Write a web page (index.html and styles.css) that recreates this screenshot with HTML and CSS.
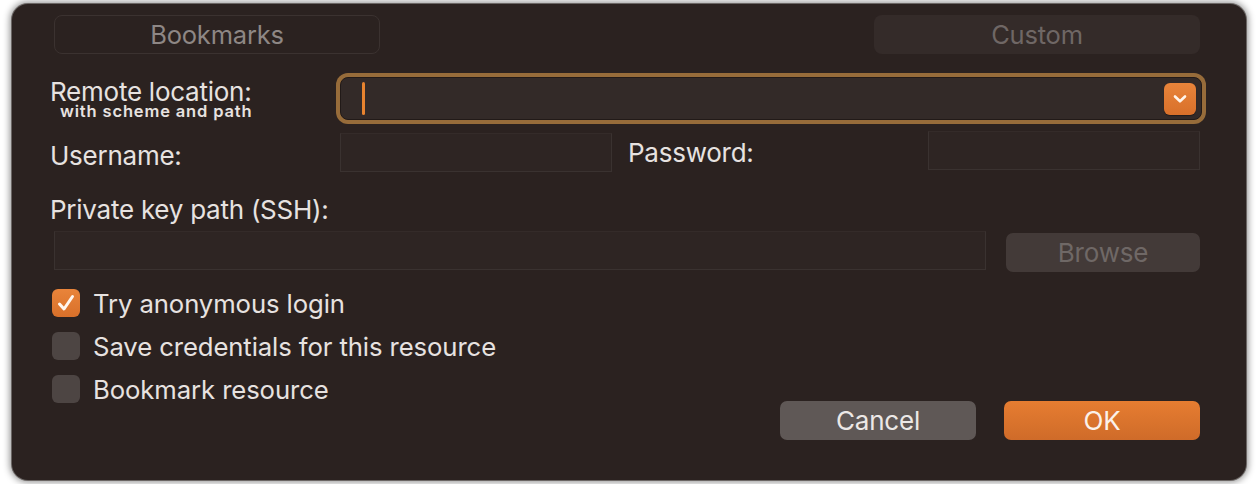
FILE: index.html
```html
<!DOCTYPE html>
<html>
<head>
<meta charset="utf-8">
<link rel="stylesheet" href="styles.css">
</head>
<body>
<div class="window">
  <div class="tabs">
    <div class="tab tab-bookmarks">Bookmarks</div>
    <div class="tab tab-custom">Custom</div>
  </div>

  <div class="row row-remote">
    <div class="label-block">
      <div class="label remote-label">Remote location:</div>
      <div class="sublabel">with scheme and path</div>
    </div>
    <div class="combo">
      <span class="caret"></span>
      <span class="combo-btn">
        <svg width="16" height="12" viewBox="0 0 16 12"><path d="M3 3.5 L8 8.3 L13 3.5" fill="none" stroke="#fff4ea" stroke-width="2.6" stroke-linecap="round" stroke-linejoin="round"/></svg>
      </span>
    </div>
  </div>

  <div class="row row-cred">
    <div class="label user-label">Username:</div>
    <div class="field user-field"></div>
    <div class="label pass-label">Password:</div>
    <div class="field pass-field"></div>
  </div>

  <div class="label key-label">Private key path (SSH):</div>
  <div class="row row-key">
    <div class="field key-field"></div>
    <div class="btn btn-browse">Browse</div>
  </div>

  <div class="bottom">
    <div class="checks">
      <div class="check">
        <span class="box box-on">
          <svg width="22" height="20" viewBox="0 0 22 20"><path d="M4.5 11 L9 16 L17.5 3.5" fill="none" stroke="#fff6ee" stroke-width="3" stroke-linecap="round" stroke-linejoin="round"/></svg>
        </span>
        <span class="check-text">Try anonymous login</span>
      </div>
      <div class="check">
        <span class="box"></span>
        <span class="check-text">Save credentials for this resource</span>
      </div>
      <div class="check">
        <span class="box"></span>
        <span class="check-text">Bookmark resource</span>
      </div>
    </div>
    <div class="actions">
      <div class="btn btn-cancel">Cancel</div>
      <div class="btn btn-ok">OK</div>
    </div>
  </div>
</div>
</body>
</html>
```

FILE: styles.css
```css
* { box-sizing: border-box; }
html, body { margin: 0; padding: 0; background: #ffffff; }
body {
  width: 1256px;
  height: 484px;
  padding: 4px 10px 0 12px;
  font-family: Inter, "Noto Sans", sans-serif;
  overflow: hidden;
}
.window {
  width: 1234px;
  height: 476px;
  background: #2b2220;
  border-radius: 16px;
  box-shadow: 0 0 0 1px #6b6664, 0 0 7px 2px rgba(0,0,0,0.45);
  padding: 11px 46px 0 38px;
  display: flex;
  flex-direction: column;
  color: #e7e2e0;
}
.tabs {
  display: flex;
  justify-content: space-between;
  padding-left: 4px;
  height: 39px;
}
.tab {
  width: 326px;
  height: 39px;
  border-radius: 8px;
  display: flex;
  align-items: center;
  justify-content: center;
  font-size: 25.5px;
  letter-spacing: -0.2px;
  line-height: 26px;
}
.tab-bookmarks {
  border: 1px solid #3b3230;
  color: #8e8785;
}
.tab-custom {
  background: #342b29;
  color: #6f6765;
}
.row { display: flex; align-items: flex-start; }
.label {
  font-size: 26px;
  line-height: 26px;
  letter-spacing: -0.25px;
  color: #e7e2e0;
}
.row-remote {
  margin-top: 23px;
  height: 43px;
}
.label-block { width: 290px; margin-top: 3.5px; }
.remote-label { line-height: 22px; }
.sublabel {
  font-size: 16.5px;
  font-weight: 600;
  letter-spacing: 0.85px;
  line-height: 14px;
  padding-left: 10px;
  margin-top: 1.5px;
  color: #e7e2e0;
}
.combo {
  flex: 1;
  margin-right: -2px;
  height: 43px;
  background: #332a28;
  border: 1px solid #221a18;
  border-radius: 8px;
  box-shadow: 0 0 0 4px #976c3a;
  display: flex;
  align-items: center;
  justify-content: space-between;
  padding: 0 5px 0 21px;
}
.caret {
  width: 3px;
  height: 33px;
  border-radius: 2px;
  background: #e8832f;
}
.combo-btn {
  width: 32px;
  height: 32px;
  border-radius: 6px;
  background: linear-gradient(#e9843a, #d8702a);
  display: flex;
  align-items: center;
  justify-content: center;
  box-shadow: 0 1px 1px rgba(0,0,0,0.35);
}
.row-cred {
  margin-top: 11px;
}
.field {
  background: #2e2523;
  border: 1px solid #3a3230;
  border-top-color: #342b29;
  height: 39px;
}
.user-label { width: 290px; margin-top: 11.5px; }
.user-field { width: 272px; margin-top: 2px; }
.pass-label { width: 300px; margin-left: 16px; margin-top: 8.5px; }
.pass-field { width: 272px; }
.key-label { margin-top: 25px; }
.row-key {
  margin-top: 8px;
  padding-left: 4px;
}
.key-field { width: 932px; }
.btn {
  display: flex;
  align-items: center;
  justify-content: center;
  border-radius: 7px;
  font-size: 26px;
  line-height: 26px;
  letter-spacing: -0.2px;
}
.btn-browse {
  margin-left: 20px;
  margin-top: 2px;
  width: 194px;
  height: 39px;
  background: #433a38;
  color: #6f6866;
}
.bottom {
  display: flex;
  justify-content: space-between;
  align-items: flex-start;
  margin-top: 17px;
  padding-left: 2px;
}
.checks {
  display: flex;
  flex-direction: column;
  gap: 15px;
}
.check {
  display: flex;
  align-items: center;
  height: 28px;
}
.box {
  width: 28px;
  height: 28px;
  border-radius: 6px;
  background: #4d4543;
  display: flex;
  align-items: center;
  justify-content: center;
}
.box-on {
  background: linear-gradient(#e9843a, #d8702a);
}
.check-text {
  margin-left: 13px;
  margin-top: 2px;
  font-size: 25.7px;
  line-height: 26px;
  letter-spacing: -0.1px;
  color: #e7e2e0;
}
.actions {
  display: flex;
  gap: 28px;
  margin-top: 112px;
}
.btn-cancel {
  width: 196px;
  height: 39px;
  background: #5f5856;
  color: #ece8e6;
}
.btn-ok {
  width: 196px;
  height: 39px;
  background: linear-gradient(#e67d31, #cf6b29);
  color: #fbf1ea;
}
```
